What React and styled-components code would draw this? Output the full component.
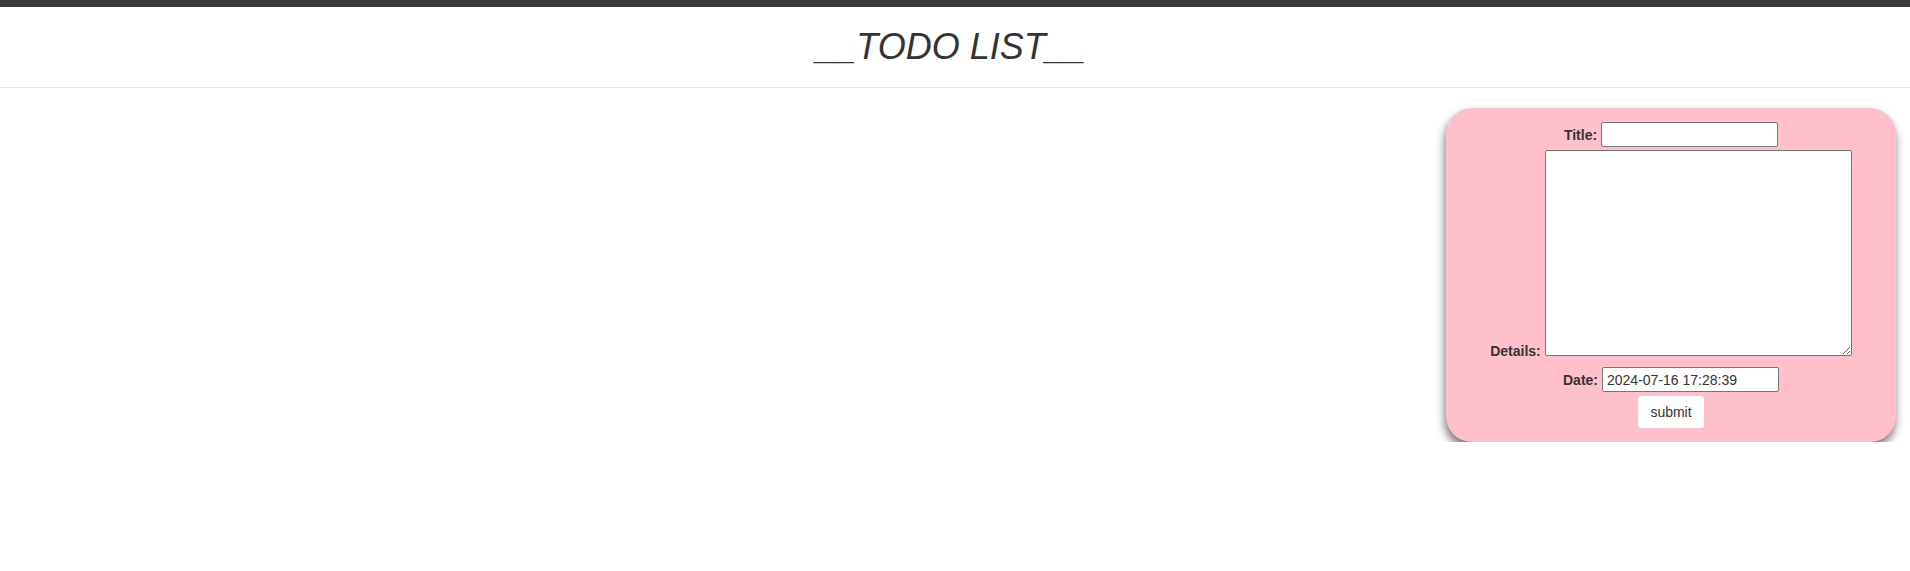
import React, { useState } from "react";
import styled, { createGlobalStyle } from "styled-components";

const GlobalStyle = createGlobalStyle`
  html, body {
    margin: 0;
    padding: 0;
    background: #ffffff;
    font-family: "Liberation Sans", Arial, sans-serif;
  }
`;

const Header = styled.header`
  border-top: 7px solid #3b3b3b;
  border-bottom: 1px solid #e6e6e6;
  height: 80px;
  display: flex;
  align-items: center;
  justify-content: center;
`;

const Heading = styled.h1`
  margin: 0 8px 0 0;
  font-size: 36px;
  font-weight: 400;
  font-style: italic;
  color: #333333;
`;

const Main = styled.main`
  display: flex;
  justify-content: flex-end;
  padding: 20px 14px 0 0;
`;

const Card = styled.form`
  width: 450px;
  height: 334px;
  box-sizing: border-box;
  padding-top: 14px;
  background: pink;
  border-radius: 26px;
  box-shadow: -1px 6px 10px rgba(0, 0, 0, 0.55);
  display: flex;
  flex-direction: column;
  align-items: center;
`;

const Row = styled.div`
  display: flex;
  align-items: ${(p) => (p.$bottom ? "flex-end" : "center")};
  gap: 4px;
  margin-top: ${(p) => p.$top || 0}px;
`;

const Label = styled.label`
  font-size: 14px;
  line-height: 16px;
  font-weight: 700;
  color: #333333;
  margin-bottom: ${(p) => (p.$bottom ? "-3px" : "0")};
`;

const Field = styled.input`
  width: 177px;
  height: 25px;
  box-sizing: border-box;
  padding: 1px 4px;
  border: 1px solid #767676;
  border-radius: 2px;
  background: #ffffff;
  font-family: "Liberation Sans", Arial, sans-serif;
  font-size: 14px;
  color: #333333;
`;

const Details = styled.textarea`
  width: 307px;
  height: 206px;
  box-sizing: border-box;
  border: 1px solid #767676;
  border-radius: 2px;
  background: #ffffff;
  font-family: "Liberation Sans", Arial, sans-serif;
  font-size: 14px;
  display: block;
`;

const Submit = styled.button`
  margin-top: 4px;
  width: 66px;
  height: 32px;
  border: none;
  border-radius: 3px;
  background: #ffffff;
  font-family: "Liberation Sans", Arial, sans-serif;
  font-size: 14px;
  color: #333333;
  cursor: pointer;
`;

function App() {
  const [title, setTitle] = useState("");
  const [details, setDetails] = useState("");
  const [date, setDate] = useState("2024-07-16 17:28:39");

  return (
    <>
      <GlobalStyle />
      <Header>
        <Heading>__TODO LIST__</Heading>
      </Header>
      <Main>
        <Card onSubmit={(e) => e.preventDefault()}>
          <Row>
            <Label htmlFor="title">Title:</Label>
            <Field
              id="title"
              value={title}
              onChange={(e) => setTitle(e.target.value)}
            />
          </Row>
          <Row $bottom $top={3}>
            <Label htmlFor="details" $bottom>
              Details:
            </Label>
            <Details
              id="details"
              value={details}
              onChange={(e) => setDetails(e.target.value)}
            />
          </Row>
          <Row $top={11}>
            <Label htmlFor="date">Date:</Label>
            <Field
              id="date"
              value={date}
              onChange={(e) => setDate(e.target.value)}
            />
          </Row>
          <Submit type="submit">submit</Submit>
        </Card>
      </Main>
    </>
  );
}

export default App;
